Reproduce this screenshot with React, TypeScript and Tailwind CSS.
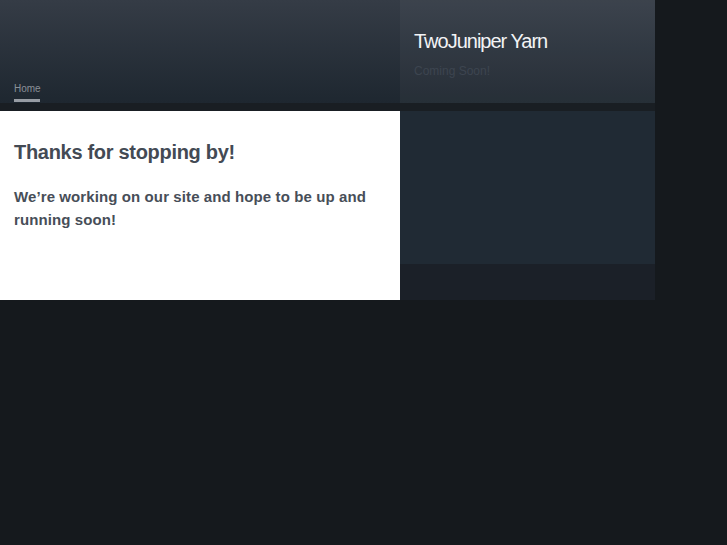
export default function App() {
  return (
    <div className="min-h-[545px] bg-[#15191d] font-['Liberation_Sans',Arial,sans-serif]">
      <div className="w-[655px]">
        <header className="flex h-[103px] bg-gradient-to-b from-[#353c46] to-[#1e2730]">
          <div className="flex w-[400px] flex-col justify-end px-[14px]">
            <a className="w-[26px] text-[10px] leading-[12px] text-[#8a9098]">Home</a>
            <span className="mt-[4px] mb-[1px] block h-[3px] w-[26px] bg-[#979ca3]" />
          </div>
          <div className="w-[255px] bg-white/[0.035] px-[14px] pt-[29px]">
            <h1 className="text-[20px] leading-[24px] tracking-[-1px] text-[#f2f3f5]">TwoJuniper Yarn</h1>
            <p className="mt-[11px] text-[12px] leading-[14px] text-[#3d4550]">Coming Soon!</p>
          </div>
        </header>
        <div className="h-[8px] bg-[#191e23]" />
        <div className="flex">
          <main className="h-[189px] w-[400px] bg-white px-[14px] pt-[29px]">
            <h2 className="text-[20px] font-bold leading-[24px] tracking-[-0.3px] text-[#434a54]">Thanks for stopping by!</h2>
            <p className="mt-[21px] text-[15px] font-bold leading-[23px] tracking-[0.1px] text-[#474e58]">
              We’re working on our site and hope to be up and running soon!
            </p>
          </main>
          <aside className="w-[255px]">
            <div className="h-[153px] bg-[#202a34]" />
            <div className="h-[36px] bg-[#1b2028]" />
          </aside>
        </div>
      </div>
    </div>
  );
}
